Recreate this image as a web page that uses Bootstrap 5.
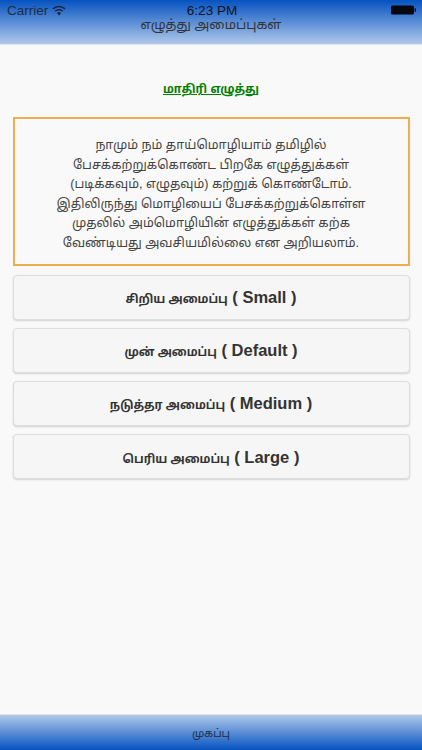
<!DOCTYPE html>
<html lang="ta">
<head>
<meta charset="utf-8">
<title>எழுத்து அமைப்புகள்</title>
<link href="https://cdn.jsdelivr.net/npm/bootstrap@5.3.0/dist/css/bootstrap.min.css" rel="stylesheet">
<style>
html,body{height:750px;overflow:hidden}
body{background:#f9f9f9;font-family:"Liberation Sans","Noto Sans Tamil","Noto Sans",sans-serif;color:#333}
.app-shell{height:750px}
.top-bar{height:45px;background:linear-gradient(#0553c1,#b0c8ea);border-bottom:1px solid #dfe6f0;position:relative}
.status-row{height:17px;padding:3px 5px 0 7px;font-size:14px;color:#111;line-height:15px}
.status-carrier{font-size:13.5px;color:#1d2c44}
.status-time{position:absolute;left:2px;right:0;top:3px;text-align:center;font-size:13.5px;line-height:15px;color:#0b1420}
.bar-title{font-size:13.2px;color:#333;line-height:14px;text-align:center;margin-top:1px}
.sample-link{margin-top:34px;font-size:11.6px;font-weight:700;color:#008000;text-decoration:underline;text-align:center;line-height:20px}
.sample-box{margin:18px 12.5px 0;height:149px;border:2px solid #f0ad4e;padding:17px 4px 0;text-align:center;font-size:12.6px;line-height:19.5px;color:#444}
.type-list{margin:8.5px 12.5px 0;gap:8.33px}
.type-btn{height:45px;background:#f6f6f6;border:1px solid #ddd;border-radius:4px;box-shadow:0 1px 2px rgba(0,0,0,.16);font-size:16.5px;font-weight:700;color:#333;padding:0;--bs-btn-hover-bg:#f6f6f6}
.tamil-part{font-size:11.6px}
.bottom-bar{height:36px;background:linear-gradient(#b0c8ea,#0553c1);border-top:1px solid #e4e4e4;font-size:10.8px;color:#1e2c44;line-height:37px;text-align:center}
</style>
</head>
<body>
<div class="app-shell d-flex flex-column">
  <header class="top-bar">
    <div class="status-row d-flex justify-content-between align-items-center">
      <span class="status-carrier d-flex align-items-center gap-1">Carrier
        <svg width="14" height="11" viewBox="0 0 14 11" aria-hidden="true"><path d="M7 10.5 4.9 8.1a3 3 0 0 1 4.2 0Z" fill="#16243c"/><path d="M3.2 6.2a5.4 5.4 0 0 1 7.6 0M1 3.9a8.6 8.6 0 0 1 12 0" fill="none" stroke="#16243c" stroke-width="1.5"/></svg>
      </span>
      <span class="status-time">6:23 PM</span>
      <svg width="26" height="10" viewBox="0 0 26 10" aria-hidden="true"><rect x="0" y="0.5" width="23" height="9" rx="1.5" fill="#05080f"/><rect x="23.6" y="3.2" width="1.4" height="3.6" rx=".6" fill="#05080f"/></svg>
    </div>
    <div class="bar-title">எழுத்து அமைப்புகள்</div>
  </header>
  <main class="flex-grow-1">
    <div class="sample-link">மாதிரி எழுத்து</div>
    <div class="sample-box">
      நாமும் நம் தாய்மொழியாம் தமிழில்<br>
      பேசக்கற்றுக்கொண்ட பிறகே எழுத்துக்கள்<br>
      (படிக்கவும், எழுதவும்) கற்றுக் கொண்டோம்.<br>
      இதிலிருந்து மொழியைப் பேசக்கற்றுக்கொள்ள<br>
      முதலில் அம்மொழியின் எழுத்துக்கள் கற்க<br>
      வேண்டியது அவசியமில்லை என அறியலாம்.
    </div>
    <div class="type-list d-flex flex-column">
      <button type="button" class="btn type-btn w-100"><span class="tamil-part">சிறிய அமைப்பு</span> ( Small )</button>
      <button type="button" class="btn type-btn w-100"><span class="tamil-part">முன் அமைப்பு</span> ( Default )</button>
      <button type="button" class="btn type-btn w-100"><span class="tamil-part">நடுத்தர அமைப்பு</span> ( Medium )</button>
      <button type="button" class="btn type-btn w-100"><span class="tamil-part">பெரிய அமைப்பு</span> ( Large )</button>
    </div>
  </main>
  <footer class="bottom-bar">முகப்பு</footer>
</div>
<script src="https://cdn.jsdelivr.net/npm/bootstrap@5.3.0/dist/js/bootstrap.bundle.min.js"></script>
</body>
</html>
